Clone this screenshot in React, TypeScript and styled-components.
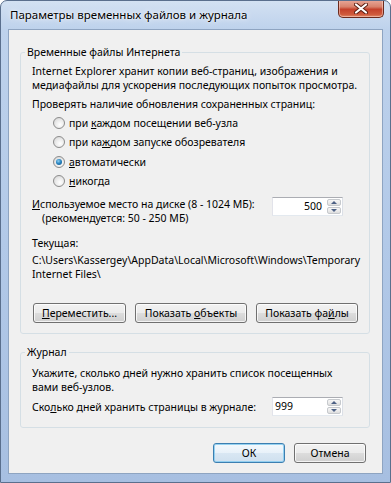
import React from 'react';
import styled, { createGlobalStyle } from 'styled-components';

const GlobalStyle = createGlobalStyle`
  html, body {
    margin: 0;
    padding: 0;
    background: #ffffff;
  }
`;

const Window = styled.div`
  width: 391px;
  height: 483px;
  box-sizing: border-box;
  display: flex;
  flex-direction: column;
  border: 1px solid #5a6f8d;
  border-radius: 7px 7px 0 0;
  background: linear-gradient(180deg, #d3e1f2 0px, #bed2ec 28px, #b2c9e8 50%, #a7bfe1 100%);
  overflow: hidden;
  font-family: 'Noto Sans', 'Open Sans', sans-serif;
  font-size: 10.5px;
  line-height: 14px;
  color: #000;
`;

const TitleBar = styled.div`
  height: 28px;
  flex: none;
  display: flex;
  justify-content: space-between;
  align-items: flex-start;
  padding: 0 6px 0 9px;
`;

const Title = styled.div`
  font-size: 11.5px;
  line-height: 28px;
  color: #000;
  text-shadow: 0 0 6px rgba(255, 255, 255, 0.95), 0 0 2px rgba(255, 255, 255, 0.9);
`;

const CloseButton = styled.div`
  width: 46px;
  height: 18px;
  margin-top: -1px;
  box-sizing: border-box;
  display: flex;
  align-items: center;
  justify-content: center;
  border: 1px solid #6b2a1d;
  border-top: none;
  border-radius: 0 0 5px 5px;
  background: linear-gradient(180deg, #e9a99a 0%, #d8826c 40%, #c4412b 55%, #cf5a3c 85%, #e08a6a 100%);
  box-shadow: inset 0 0 0 1px rgba(255, 220, 210, 0.5);
`;

const Client = styled.div`
  flex: 1;
  margin: 0 7px 8px 7px;
  border: 1px solid #8ea4c1;
  background: #f0f0f0;
  padding: 15px 12px 0 11px;
  display: flex;
  flex-direction: column;
`;

const Group = styled.fieldset<{ $gap?: number; $bottom: number }>`
  margin: ${p => p.$gap ?? 0}px 0 0 0;
  padding: 5px 11px ${p => p.$bottom}px 11px;
  border: 1px solid #d5dfe5;
  border-radius: 3px;
  min-width: 0;
  display: flex;
  flex-direction: column;
`;

const Legend = styled.legend`
  padding: 0 2px;
  margin-left: -7px;
  line-height: 14px;
`;

const Text = styled.div<{ $top?: number; $indent?: number }>`
  margin-top: ${p => p.$top ?? 0}px;
  padding-left: ${p => p.$indent ?? 0}px;
  white-space: nowrap;
`;

const Key = styled.span`
  text-decoration: underline;
  text-underline-offset: 1px;
`;

const RadioList = styled.div`
  margin-top: 2px;
  padding-left: 21px;
  display: flex;
  flex-direction: column;
`;

const RadioRow = styled.div`
  height: 19.5px;
  display: flex;
  align-items: center;
  gap: 4px;
`;

const RadioCircle = styled.span<{ $checked?: boolean }>`
  position: relative;
  flex: none;
  width: 12px;
  height: 12px;
  box-sizing: border-box;
  border-radius: 50%;
  border: 1px solid #8b8b8b;
  background: radial-gradient(circle at 60% 65%, #ffffff 0%, #ececec 45%, #cfcfcf 100%);

  &::after {
    content: '';
    display: ${p => (p.$checked ? 'block' : 'none')};
    position: absolute;
    inset: 2px;
    border-radius: 50%;
    background: radial-gradient(circle at 40% 35%, #8fd0f2 0%, #2a86c2 45%, #0f4d7f 100%);
  }
`;

const FieldRow = styled.div<{ $top: number; $align: string }>`
  margin-top: ${p => p.$top}px;
  display: flex;
  align-items: ${p => p.$align};
`;

const Spin = styled.div`
  margin-left: auto;
  margin-right: 15px;
  width: 71px;
  height: 19px;
  box-sizing: border-box;
  flex: none;
  display: flex;
  border: 1px solid;
  border-color: #abadb3 #dbdfe6 #e3e9ef #e2e3ea;
  background: #ffffff;
`;

const SpinValue = styled.div<{ $align: 'left' | 'right' }>`
  flex: 1;
  line-height: 17px;
  text-align: ${p => p.$align};
  padding: ${p => (p.$align === 'right' ? '0 5px 0 0' : '0 0 0 2px')};
`;

const SpinArrows = styled.div`
  width: 15px;
  display: flex;
  flex-direction: column;
  gap: 1px;
  padding: 1px 1px 1px 0;
  box-sizing: border-box;
`;

const SpinArrow = styled.div<{ $up?: boolean }>`
  flex: 1;
  border: 1px solid #c6c9cd;
  border-radius: 2px;
  background: linear-gradient(180deg, #f7f7f7 0%, #ececec 50%, #dedede 100%);
  display: flex;
  align-items: center;
  justify-content: center;

  &::before {
    content: '';
    width: 0;
    height: 0;
    border-left: 3px solid transparent;
    border-right: 3px solid transparent;
    ${p => (p.$up ? 'border-bottom: 3px solid #4d6185;' : 'border-top: 3px solid #4d6185;')}
  }
`;

const ButtonRow = styled.div<{ $top: number; $end?: boolean }>`
  margin-top: ${p => p.$top}px;
  display: flex;
  gap: 9px;
  justify-content: ${p => (p.$end ? 'flex-end' : 'flex-start')};
  padding: ${p => (p.$end ? '0 4px 0 0' : '0 0 0 1px')};
`;

const Button = styled.div<{ $w: number; $default?: boolean }>`
  width: ${p => p.$w}px;
  height: 20px;
  box-sizing: border-box;
  flex: none;
  display: flex;
  align-items: center;
  justify-content: center;
  border: 1px solid ${p => (p.$default ? '#3c7fb1' : '#707070')};
  border-radius: 3px;
  background: ${p =>
    p.$default
      ? 'linear-gradient(180deg, #f4f9fd 0%, #e8f1f9 50%, #d9e7f3 50%, #cfe0ef 100%)'
      : 'linear-gradient(180deg, #f2f2f2 0%, #ebebeb 50%, #dddddd 50%, #cfcfcf 100%)'};
  box-shadow: inset 0 0 0 1px ${p => (p.$default ? 'rgba(140, 205, 240, 0.9)' : 'rgba(255, 255, 255, 0.75)')};
  white-space: nowrap;
`;

const CloseGlyph = () => (
  <svg width="14" height="11" viewBox="0 0 14 11">
    <path d="M2 1.5 L12 9.5 M12 1.5 L2 9.5" stroke="#5a1e12" strokeWidth="4" strokeLinecap="round" />
    <path d="M2 1.5 L12 9.5 M12 1.5 L2 9.5" stroke="#ffffff" strokeWidth="2.2" strokeLinecap="round" />
  </svg>
);

const Spinner = ({ value, align }: { value: string; align: 'left' | 'right' }) => (
  <Spin>
    <SpinValue $align={align}>{value}</SpinValue>
    <SpinArrows>
      <SpinArrow $up />
      <SpinArrow />
    </SpinArrows>
  </Spin>
);

const App: React.FC = () => {
  return (
    <>
      <GlobalStyle />
      <Window>
        <TitleBar>
          <Title>Параметры временных файлов и журнала</Title>
          <CloseButton>
            <CloseGlyph />
          </CloseButton>
        </TitleBar>
        <Client>
          <Group $bottom={10}>
            <Legend>Временные файлы Интернета</Legend>
            <Text>Internet Explorer хранит копии веб-страниц, изображения и</Text>
            <Text>медиафайлы для ускорения последующих попыток просмотра.</Text>
            <Text $top={5}>Проверять наличие обновления сохраненных страниц:</Text>
            <RadioList>
              <RadioRow>
                <RadioCircle />
                <span>при <Key>к</Key>аждом посещении веб-узла</span>
              </RadioRow>
              <RadioRow>
                <RadioCircle />
                <span>при ка<Key>ж</Key>дом запуске обозревателя</span>
              </RadioRow>
              <RadioRow>
                <RadioCircle $checked />
                <span><Key>а</Key>втоматически</span>
              </RadioRow>
              <RadioRow>
                <RadioCircle />
                <span><Key>н</Key>икогда</span>
              </RadioRow>
            </RadioList>
            <FieldRow $top={6} $align="flex-start">
              <div>
                <Text><Key>И</Key>спользуемое место на диске (8 - 1024 МБ):</Text>
                <Text $indent={10}>(рекомендуется: 50 - 250 МБ)</Text>
              </div>
              <Spinner value="500" align="right" />
            </FieldRow>
            <Text $top={11}>Текущая:</Text>
            <Text $top={3}>C:\Users\Kassergey\AppData\Local\Microsoft\Windows\Temporary</Text>
            <Text>Internet Files\</Text>
            <ButtonRow $top={22}>
              <Button $w={93}><span><Key>П</Key>ереместить...</span></Button>
              <Button $w={112}><span>Показать <Key>о</Key>бъекты</span></Button>
              <Button $w={102}><span>Показать фа<Key>й</Key>лы</span></Button>
            </ButtonRow>
          </Group>
          <Group $gap={11} $bottom={11}>
            <Legend>Журнал</Legend>
            <Text $top={2}>Укажите, сколько дней нужно хранить список посещенных</Text>
            <Text>вами веб-узлов.</Text>
            <FieldRow $top={3} $align="center">
              <Text>Ско<Key>л</Key>ько дней хранить страницы в журнале:</Text>
              <Spinner value="999" align="left" />
            </FieldRow>
          </Group>
          <ButtonRow $top={15} $end>
            <Button $w={72} $default>ОК</Button>
            <Button $w={72}>Отмена</Button>
          </ButtonRow>
        </Client>
      </Window>
    </>
  );
};

export default App;
